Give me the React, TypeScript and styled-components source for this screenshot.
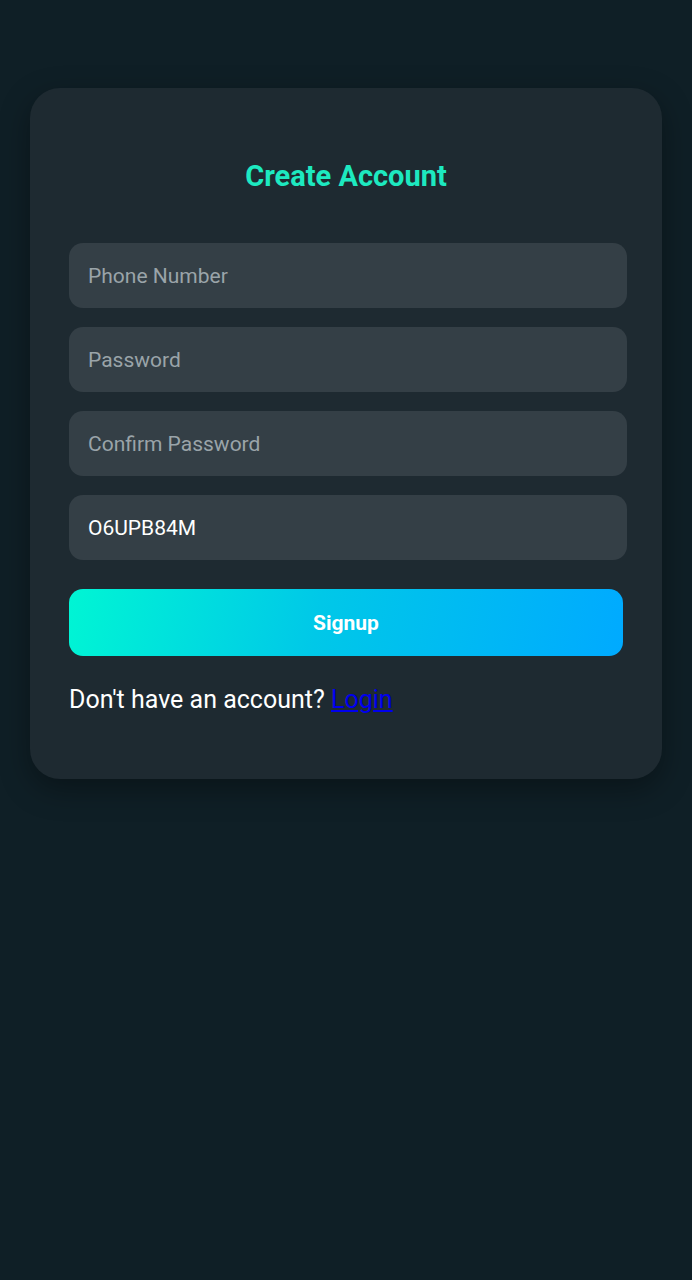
import styled, { createGlobalStyle } from "styled-components";

const GlobalStyle = createGlobalStyle`
  html, body {
    margin: 0;
    padding: 0;
    background: #0f1f26;
    font-family: Roboto, "Noto Sans", sans-serif;
  }
  * { box-sizing: border-box; }
`;

const Page = styled.div`
  min-height: 1280px;
  padding: 88px 30px 0;
  background: #0f1f26;
`;

const Card = styled.div`
  background: #1e2a31;
  border-radius: 30px;
  padding: 71px 39px 65px;
  box-shadow: 0 10px 30px rgba(0, 0, 0, 0.35);
  display: flex;
  flex-direction: column;
`;

const Title = styled.h2`
  margin: 0 0 50px;
  text-align: center;
  color: #1de9c0;
  font-size: 29px;
  font-weight: 700;
  line-height: 34px;
`;

const Form = styled.form`
  display: flex;
  flex-direction: column;
  gap: 19px;
`;

const Input = styled.input`
  width: calc(100% + 4px);
  height: 65px;
  border: none;
  outline: none;
  border-radius: 14px;
  background: #343f46;
  padding: 0 19px;
  color: #ffffff;
  font-family: Roboto, "Noto Sans", sans-serif;
  font-size: 21px;

  &::placeholder {
    color: #9aa4a9;
  }
`;

const Button = styled.button`
  margin-top: 10px;
  height: 67px;
  border: none;
  border-radius: 14px;
  background: linear-gradient(100deg, #00f5d4 0%, #00c8e8 45%, #00aaff 100%);
  color: #ffffff;
  font-family: Roboto, "Noto Sans", sans-serif;
  font-size: 21px;
  font-weight: 700;
  cursor: pointer;
`;

const Footer = styled.p`
  margin: 29px 0 0;
  color: #ffffff;
  font-size: 25px;
  line-height: 29px;
`;

const LoginLink = styled.a`
  color: #0000ee;
  text-decoration: underline;
`;

export default function App() {
  return (
    <>
      <GlobalStyle />
      <Page>
        <Card>
          <Title>Create Account</Title>
          <Form onSubmit={(e) => e.preventDefault()}>
            <Input type="tel" placeholder="Phone Number" />
            <Input type="password" placeholder="Password" />
            <Input type="password" placeholder="Confirm Password" />
            <Input type="text" defaultValue="O6UPB84M" />
            <Button type="submit">Signup</Button>
          </Form>
          <Footer>
            Don't have an account? <LoginLink href="#">Login</LoginLink>
          </Footer>
        </Card>
      </Page>
    </>
  );
}
